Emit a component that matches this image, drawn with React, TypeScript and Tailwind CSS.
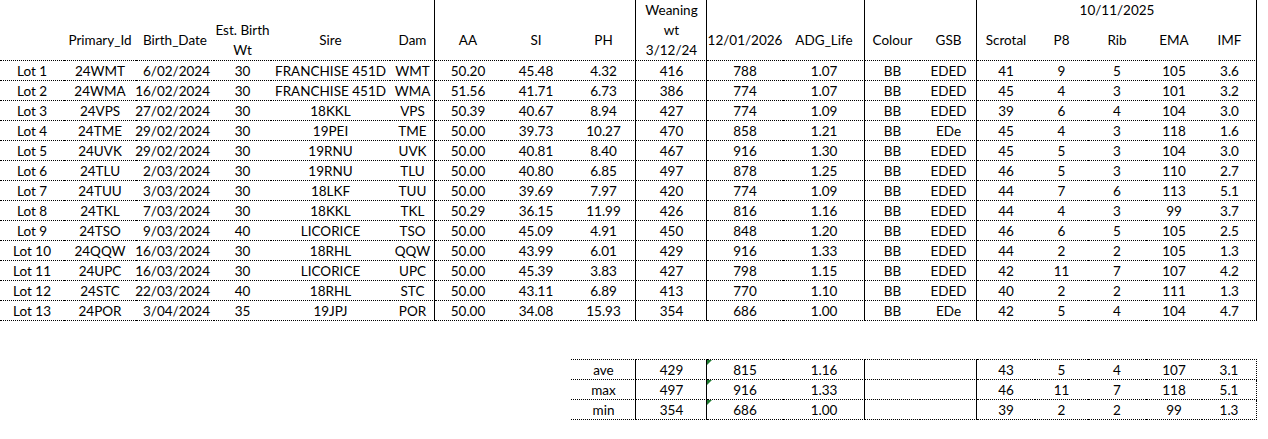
import React from 'react';

const gridCols =
  'grid grid-cols-[64px_72px_78px_57px_119px_45px_66px_70px_65px_71px_76px_82px_55px_57px_58px_53px_58px_56px_55px]';

// columns that carry a solid rule on their right edge
const solidRight = [5, 8, 9, 11, 13, 18];

const rows: string[][] = [
  ['Lot 1', '24WMT', '6/02/2024', '30', 'FRANCHISE 451D', 'WMT', '50.20', '45.48', '4.32', '416', '788', '1.07', 'BB', 'EDED', '41', '9', '5', '105', '3.6'],
  ['Lot 2', '24WMA', '16/02/2024', '30', 'FRANCHISE 451D', 'WMA', '51.56', '41.71', '6.73', '386', '774', '1.07', 'BB', 'EDED', '45', '4', '3', '101', '3.2'],
  ['Lot 3', '24VPS', '27/02/2024', '30', '18KKL', 'VPS', '50.39', '40.67', '8.94', '427', '774', '1.09', 'BB', 'EDED', '39', '6', '4', '104', '3.0'],
  ['Lot 4', '24TME', '29/02/2024', '30', '19PEI', 'TME', '50.00', '39.73', '10.27', '470', '858', '1.21', 'BB', 'EDe', '45', '4', '3', '118', '1.6'],
  ['Lot 5', '24UVK', '29/02/2024', '30', '19RNU', 'UVK', '50.00', '40.81', '8.40', '467', '916', '1.30', 'BB', 'EDED', '45', '5', '3', '104', '3.0'],
  ['Lot 6', '24TLU', '2/03/2024', '30', '19RNU', 'TLU', '50.00', '40.80', '6.85', '497', '878', '1.25', 'BB', 'EDED', '46', '5', '3', '110', '2.7'],
  ['Lot 7', '24TUU', '3/03/2024', '30', '18LKF', 'TUU', '50.00', '39.69', '7.97', '420', '774', '1.09', 'BB', 'EDED', '44', '7', '6', '113', '5.1'],
  ['Lot 8', '24TKL', '7/03/2024', '30', '18KKL', 'TKL', '50.29', '36.15', '11.99', '426', '816', '1.16', 'BB', 'EDED', '44', '4', '3', '99', '3.7'],
  ['Lot 9', '24TSO', '9/03/2024', '40', 'LICORICE', 'TSO', '50.00', '45.09', '4.91', '450', '848', '1.20', 'BB', 'EDED', '46', '6', '5', '105', '2.5'],
  ['Lot 10', '24QQW', '16/03/2024', '30', '18RHL', 'QQW', '50.00', '43.99', '6.01', '429', '916', '1.33', 'BB', 'EDED', '44', '2', '2', '105', '1.3'],
  ['Lot 11', '24UPC', '16/03/2024', '30', 'LICORICE', 'UPC', '50.00', '45.39', '3.83', '427', '798', '1.15', 'BB', 'EDED', '42', '11', '7', '107', '4.2'],
  ['Lot 12', '24STC', '22/03/2024', '40', '18RHL', 'STC', '50.00', '43.11', '6.89', '413', '770', '1.10', 'BB', 'EDED', '40', '2', '2', '111', '1.3'],
  ['Lot 13', '24POR', '3/04/2024', '35', '19JPJ', 'POR', '50.00', '34.08', '15.93', '354', '686', '1.00', 'BB', 'EDe', '42', '5', '4', '104', '4.7'],
];

const summary = [
  { label: 'ave', wean: '429', now: '815', adg: '1.16', rest: ['43', '5', '4', '107', '3.1'] },
  { label: 'max', wean: '497', now: '916', adg: '1.33', rest: ['46', '11', '7', '118', '5.1'] },
  { label: 'min', wean: '354', now: '686', adg: '1.00', rest: ['39', '2', '2', '99', '1.3'] },
];

const rule = 'shadow-[inset_-1px_0_0_#000]';

// single-line headings sit mid-way in the lower part of the header; wrapped ones hug the bottom
const HeadCell: React.FC<{ children?: React.ReactNode; right?: boolean; wrapped?: boolean }> = ({
  children,
  right,
  wrapped,
}) => (
  <div
    className={`row-span-2 flex items-end justify-center text-center leading-[20px] border-b border-dotted border-black ${
      wrapped ? '' : 'pb-[10px]'
    } ${right ? rule : ''}`}
  >
    <div>{children}</div>
  </div>
);

const GreenFlag = () => (
  <span className="absolute left-0 top-0 w-0 h-0 border-t-[5px] border-r-[5px] border-t-[#1f7a32] border-r-transparent" />
);

// the measurement block under 10/11/2025
const measureHeads = [
  { label: 'Scrotal', pos: 'col-start-15' },
  { label: 'P8', pos: 'col-start-16' },
  { label: 'Rib', pos: 'col-start-17' },
  { label: 'EMA', pos: 'col-start-18' },
  { label: 'IMF', pos: 'col-start-19' },
];

export default function App() {
  return (
    <div className="w-[1268px] h-[439px] bg-white text-black text-[13.5px] font-['Lato','Liberation_Sans',sans-serif] overflow-hidden">
      {/* header */}
      <div className={`${gridCols} grid-rows-[20px_41px]`}>
        <HeadCell />
        <HeadCell>Primary_Id</HeadCell>
        <HeadCell>Birth_Date</HeadCell>
        <HeadCell wrapped>
          Est. Birth
          <br />
          Wt
        </HeadCell>
        <HeadCell>Sire</HeadCell>
        <HeadCell right>Dam</HeadCell>
        <HeadCell>AA</HeadCell>
        <HeadCell>SI</HeadCell>
        <HeadCell right>PH</HeadCell>
        <HeadCell right wrapped>
          Weaning
          <br />
          wt
          <br />
          3/12/24
        </HeadCell>
        <HeadCell>12/01/2026</HeadCell>
        <HeadCell right>ADG_Life</HeadCell>
        <HeadCell>Colour</HeadCell>
        <HeadCell right>GSB</HeadCell>
        <div className={`col-span-5 row-start-1 col-start-15 flex items-center justify-center ${rule}`}>10/11/2025</div>
        {measureHeads.map((h, i) => (
          <div
            key={h.label}
            className={`row-start-2 ${h.pos} flex items-end justify-center pb-[10px] leading-[20px] border-b border-dotted border-black ${
              i === 4 ? rule : ''
            }`}
          >
            {h.label}
          </div>
        ))}
      </div>

      {/* lots */}
      <div className={gridCols}>
        {rows.map((r) =>
          r.map((v, c) => (
            <div
              key={r[0] + c}
              className={`h-[20px] flex items-center leading-[20px] whitespace-nowrap border-b border-dotted border-black ${
                c === 2 ? 'justify-end pr-[4px]' : 'justify-center'
              } ${solidRight.includes(c) ? rule : ''}`}
            >
              {v}
            </div>
          ))
        )}
      </div>

      <div className="h-[38px]" />

      {/* ave / max / min */}
      <div className={gridCols}>
        {summary.map((s, i) => {
          const edge = i === 0 ? 'h-[21px] border-t' : 'h-[20px]';
          const cell = `${edge} flex items-center justify-center leading-[20px] border-b border-dotted border-black`;
          return (
            <React.Fragment key={s.label}>
              <div className={`col-start-9 ${cell} ${rule}`}>{s.label}</div>
              <div className={`${cell} ${rule}`}>{s.wean}</div>
              <div className={`${cell} relative`}>
                <GreenFlag />
                {s.now}
              </div>
              <div className={`${cell} ${rule}`}>{s.adg}</div>
              <div className={cell} />
              <div className={`${cell} ${rule}`} />
              {s.rest.map((v, k) => (
                <div key={k} className={`${cell} ${k === 4 ? 'border-r' : ''}`}>
                  {v}
                </div>
              ))}
            </React.Fragment>
          );
        })}
      </div>
    </div>
  );
}
